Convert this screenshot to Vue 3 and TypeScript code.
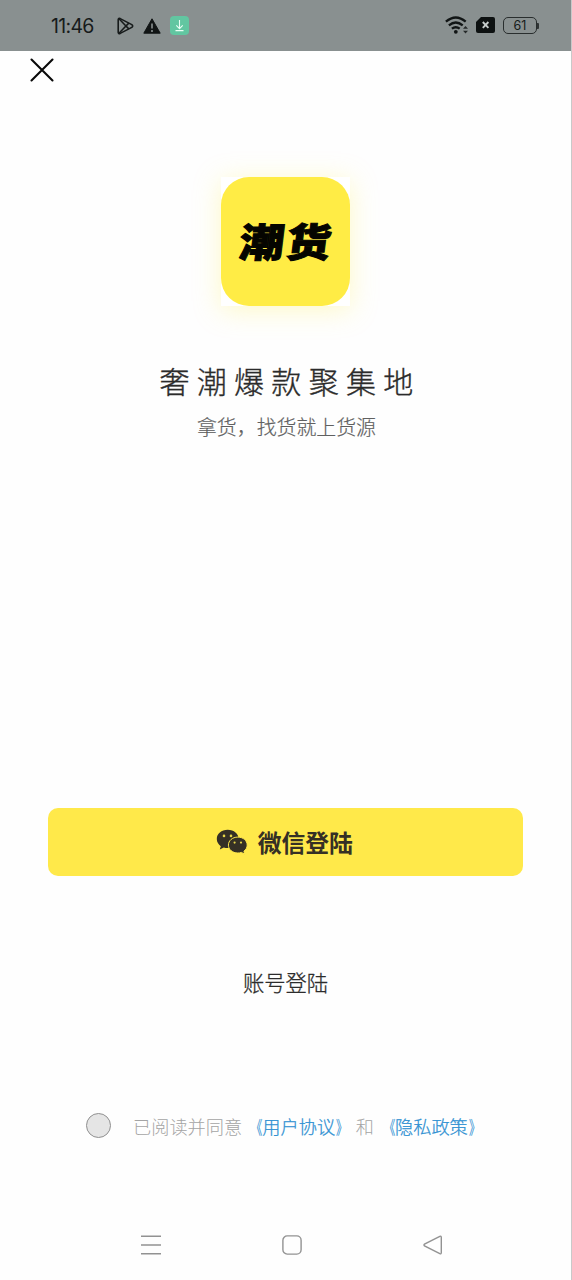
<script setup lang="ts">
const slogan: string = '奢潮爆款聚集地'
const subtitle: string = '拿货，找货就上货源'
const battery: number = 61
</script>

<template>
  <div class="screen">
    <header class="status">
      <span class="time">11:46</span>
      <svg class="play" width="18" height="18" viewBox="0 0 18 18" fill="none" stroke="#171b1b" stroke-width="1.6" stroke-linejoin="round">
        <path d="M1.2 2.6Q1.4.8 3.2 1.6L14.8 7.6Q16.6 9 14.8 10.4L3.2 16.4Q1.4 17.2 1.2 15.4Z" />
        <path d="M2 1.8 11.8 12M2 16.2 11.8 6M11.8 6.2 9 9l2.8 2.8" />
      </svg>
      <svg class="warn" width="18" height="16" viewBox="0 0 18 16">
        <path d="M9 .8 17.2 15.2H.8Z" fill="#111515" stroke="#111515" stroke-linejoin="round" />
        <path d="M9 5.5v5M9 12v2" stroke="#899090" stroke-width="1.6" />
      </svg>
      <span class="download">
        <svg width="19" height="19" viewBox="0 0 19 19" fill="none" stroke="#e9fff5" stroke-width="1.1">
          <path d="M9.5 4v8.5M6.3 9.3l3.2 3.3 3.2-3.3M5.5 14.6h8" />
        </svg>
      </span>
      <span class="spacer"></span>
      <svg class="wifi" width="24" height="19" viewBox="0 0 24 19" fill="none" stroke="#111515" stroke-width="2.3">
        <path d="M.9 5.7Q10.8-2.7 20.7 5.7M3.9 9.3q6.9-5.6 13.8 0M6.9 12.7q3.9-3 7.8 0" />
        <circle cx="10.8" cy="15.8" r="1.9" fill="#111515" stroke="none" />
        <path d="m18 12.8 2.5-2.8 2.5 2.8ZM18 14.8l2.5 2.8 2.5-2.8Z" fill="#252929" stroke="none" />
      </svg>
      <svg class="sim" width="19" height="16" viewBox="0 0 19 16">
        <path d="M5 0H17Q19 0 19 2V14Q19 16 17 16H2Q0 16 0 14V5Z" fill="#0d1111" />
        <path d="m6.8 5 5.6 5.8M12.4 5 6.8 10.8" stroke="#c5cbca" stroke-width="1.9" />
      </svg>
      <span class="battery">{{ battery }}</span>
      <span class="battery-tip"></span>
    </header>

    <svg class="close" width="24" height="24" viewBox="0 0 24 24" fill="none" stroke="#090909" stroke-width="2.1" stroke-linecap="round">
      <path d="m1.5 1.5 21 21M22.5 1.5l-21 21" />
    </svg>

    <main class="content">
      <div class="logo-frame">
        <div class="logo"><span class="logo-text">潮货</span></div>
      </div>
      <h1 class="slogan">{{ slogan }}</h1>
      <p class="subtitle">{{ subtitle }}</p>
      <button class="wechat">
        <svg width="32" height="27" viewBox="0 0 32 27">
          <path d="M11.7.8C5.4.8.8 4.8.8 10c0 3 1.6 5.5 4 7.2l-1 3.3 4-2c1.4.4 3 .6 4.8.5C22 18.6 22.6 15 22.6 10 22.6 4.8 18 .8 11.7.8Z" fill="#353025" />
          <path d="M21.8 8.1c-5.4 0-9.4 3.6-9.4 8s4 7.9 9.4 7.9c1.3 0 2.5-.2 3.6-.6l3.3 1.8-.8-3c2-1.5 3.3-3.6 3.3-6.1 0-4.4-4-8-9.4-8Z" fill="#353025" stroke="#ffe94a" stroke-width="1" />
          <g fill="#e5d448"><circle cx="8" cy="6.9" r="1.3" /><circle cx="15" cy="6.9" r="1.3" /><circle cx="18.6" cy="13.6" r="1.1" /><circle cx="25" cy="13.6" r="1.1" /></g>
        </svg>
        <span class="wechat-label">微信登陆</span>
      </button>
      <a class="account">账号登陆</a>
      <div class="agreement">
        <span class="radio"></span>
        <span class="agree-text">已阅读并同意</span>
        <a class="link"><span class="open">《</span>用户协议<span class="shut">》</span></a>
        <span class="and">和</span>
        <a class="link second"><span class="open">《</span>隐私政策<span class="shut">》</span></a>
      </div>
    </main>

    <nav class="navbar">
      <svg width="20" height="20" viewBox="0 0 20 20" stroke="#929292" stroke-width="1.5"><path d="M0 1.3h20M0 10h20M0 18.7h20" /></svg>
      <svg width="20" height="20" viewBox="0 0 20 20" fill="none" stroke="#929292" stroke-width="1.4"><rect x=".9" y=".9" width="18.2" height="18.2" rx="4.3" /></svg>
      <svg width="20" height="20" viewBox="0 0 20 20" fill="none" stroke="#929292" stroke-width="1.4"><path d="M1.5 9Q.5 10 1.5 11L16.8 18.7Q18.3 19.3 18.3 17.6V2.4Q18.3.7 16.8 1.3Z" /></svg>
    </nav>
  </div>
</template>

<style>
body { margin: 0; background: #fefefe; }
</style>

<style scoped>
.screen {
  box-sizing: border-box;
  width: 572px;
  height: 1280px;
  display: flex;
  flex-direction: column;
  overflow: hidden;
  background: #fefefe;
  border-right: 1px solid #c9c9c9;
  font-family: "Liberation Sans", "Noto Sans CJK SC", sans-serif;
}
.status {
  flex: none;
  height: 51px;
  display: flex;
  align-items: center;
  background: #899090;
  margin-right: -1px;
  color: #171b1b;
}
.time { width: 66px; margin-left: 51px; padding-top: 2px; font: 400 19.5px/51px Inter, sans-serif; letter-spacing: -0.7px; white-space: nowrap; }
.warn { margin-left: 8px; }
.download { width: 19px; height: 19px; margin-left: 9px; border-radius: 4px; background: #62c6a1; }
.download svg { display: block; }
.spacer { flex: 1; }
.wifi { margin-bottom: 1px; }
.sim { margin-left: 7px; margin-bottom: 1px; }
.battery {
  box-sizing: border-box;
  width: 34px;
  height: 17px;
  margin-left: 8px;
  border: 1.5px solid #292e2e;
  border-radius: 5px;
  font: 400 12.5px/15.5px Inter, sans-serif;
  text-align: center;
}
.battery-tip { width: 2px; height: 6px; margin-right: 33px; background: #303535; border-radius: 0 1px 1px 0; }
.close { flex: none; margin: 7px 0 0 30px; }
.content { flex: 1; display: flex; flex-direction: column; align-items: center; }
.logo-frame {
  width: 129px;
  height: 129px;
  margin: 95px 0 0;
  background: #fff;
  box-shadow: 0 4px 25px rgba(255, 239, 95, 0.34);
}
.logo { width: 129px; height: 129px; display: flex; align-items: center; justify-content: center; background: #ffec45; border-radius: 28px; }
.logo-text { margin-bottom: 4px; font: 900 43px/50px "Noto Sans CJK SC", sans-serif; letter-spacing: 2px; margin-right: -2px; color: #050500; transform: skewX(-7deg) scale(1.04, 0.92); -webkit-text-stroke: 1.1px #050500; white-space: nowrap; }
.slogan { margin: 52px 0 0 9px; font: 300 30px/44px "Noto Sans CJK SC", sans-serif; letter-spacing: 7.3px; color: #2b2b2b; -webkit-text-stroke: 0.35px #2b2b2b; white-space: nowrap; }
.subtitle { margin: 10px 0 0 2px; font: 300 19.9px/30px "Noto Sans CJK SC", sans-serif; color: #606060; -webkit-text-stroke: 0.2px #606060; white-space: nowrap; }
.wechat {
  width: 475px;
  height: 68px;
  margin: 366px 0 0;
  padding: 0 2px 0 0;
  border: 0;
  border-radius: 10px;
  background: #ffe94a;
  color: #353025;
  display: flex;
  align-items: center;
  justify-content: center;
  gap: 9.5px;
  font: 700 23.8px/36px "Noto Sans CJK SC", sans-serif;
}
.wechat-label { margin-bottom: 1px; }
.account { margin-top: 90px; font: 300 21.3px/32px "Noto Sans CJK SC", sans-serif; color: #2c2c2c; -webkit-text-stroke: 0.3px #2c2c2c; }
.agreement { width: 571px; height: 28px; margin-top: 113px; display: flex; align-items: center; font: 300 18.2px/28px "Noto Sans CJK SC", sans-serif; white-space: nowrap; }
.radio { box-sizing: border-box; width: 25px; height: 25px; margin-left: 86px; border: 1px solid #909090; border-radius: 50%; background: #e5e5e5; }
.agree-text, .link, .and { padding-top: 2px; }
.agree-text { margin-left: 22px; color: #a4a4a4; }
.link { display: flex; width: 110px; margin-left: 2px; color: #2e90d2; -webkit-text-stroke: 0.25px #2e90d2; }
.open { transform: scaleX(0.62); transform-origin: right; }
.shut { transform: translateX(1px) scaleX(0.62); transform-origin: left; }
.and { margin-left: 1.5px; color: #a4a4a4; }
.second { margin-left: 3px; }
.navbar { flex: none; height: 20px; margin: 0 128px 25px 141px; display: flex; justify-content: space-between; }
</style>
